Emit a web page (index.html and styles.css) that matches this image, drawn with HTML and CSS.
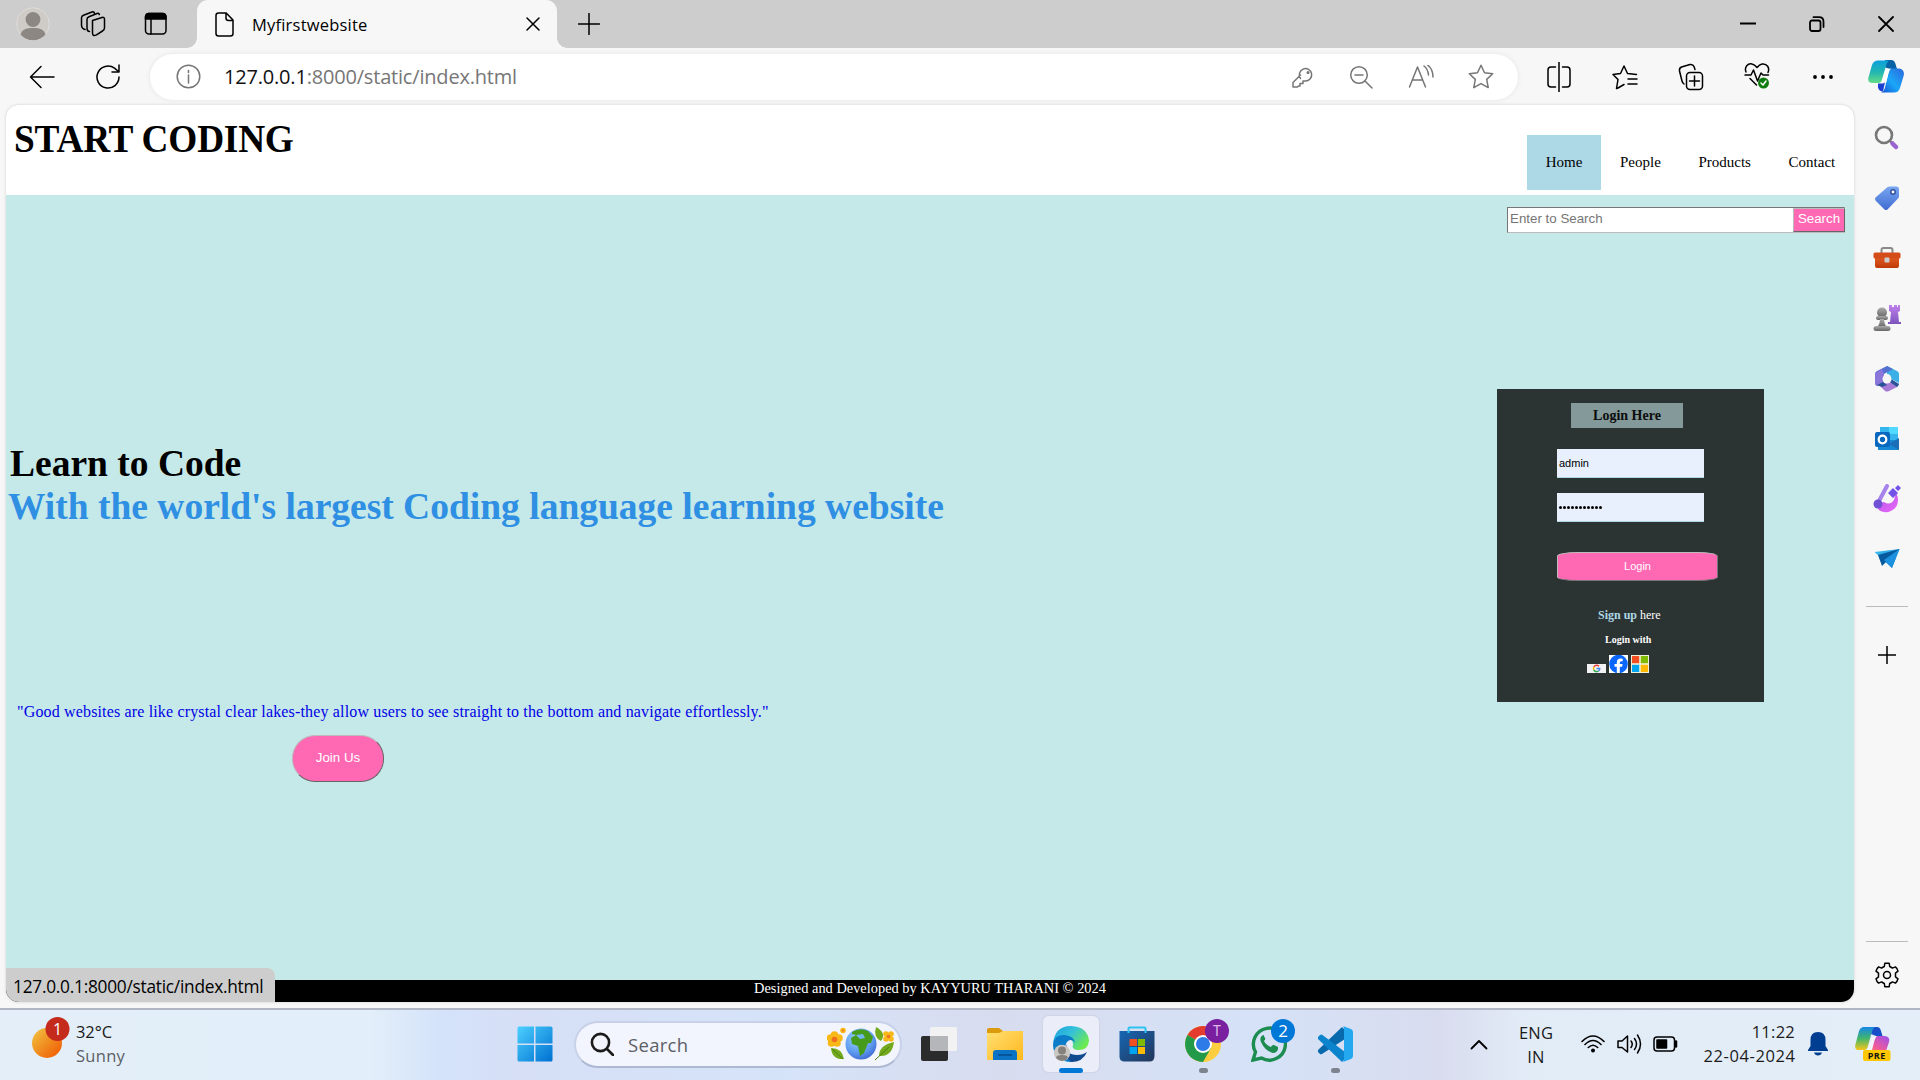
FILE: index.html
```html
<!DOCTYPE html>
<html lang="en">
<head>
<meta charset="utf-8">
<title>Myfirstwebsite</title>
<link rel="stylesheet" href="styles.css">
</head>
<body>
<svg width="0" height="0" class="defs">
  <defs>
    <linearGradient id="gSun" x1="0" y1="0" x2="1" y2="1"><stop offset="0.1" stop-color="#f0bc3c"/><stop offset="0.8" stop-color="#f06a0c"/></linearGradient>
    <linearGradient id="gWin" x1="0" y1="0" x2="1" y2="1"><stop offset="0" stop-color="#4cd0ff"/><stop offset="1" stop-color="#0070d0"/></linearGradient>
    <linearGradient id="gFolder" x1="0" y1="0" x2="1" y2="1"><stop offset="0" stop-color="#ffdf73"/><stop offset="1" stop-color="#ffb81c"/></linearGradient>
    <linearGradient id="gEdge" x1="0" y1="0" x2="1" y2="0.6"><stop offset="0" stop-color="#1b9de2"/><stop offset="0.5" stop-color="#35c1d9"/><stop offset="1" stop-color="#6cea50"/></linearGradient>
    <linearGradient id="gStore" x1="0" y1="0" x2="1" y2="1"><stop offset="0" stop-color="#1667b5"/><stop offset="1" stop-color="#243658"/></linearGradient>
    <linearGradient id="gCopA" x1="0" y1="0" x2="0" y2="1"><stop offset="0" stop-color="#0ba0dd"/><stop offset="0.5" stop-color="#21b5b2"/><stop offset="1" stop-color="#66dc88"/></linearGradient>
    <linearGradient id="gCopB" x1="1" y1="0" x2="0" y2="1"><stop offset="0" stop-color="#2b68dd"/><stop offset="0.55" stop-color="#1ba7f8"/><stop offset="1" stop-color="#1254d4"/></linearGradient>
    <linearGradient id="gPreA" x1="0" y1="0" x2="0" y2="1"><stop offset="0" stop-color="#1587e6"/><stop offset="0.5" stop-color="#43b66b"/><stop offset="1" stop-color="#f4c718"/></linearGradient>
    <linearGradient id="gPreB" x1="1" y1="0" x2="0" y2="1"><stop offset="0" stop-color="#9a50ee"/><stop offset="0.6" stop-color="#ef5a99"/><stop offset="1" stop-color="#f78a4a"/></linearGradient>
    <linearGradient id="gTag" x1="0" y1="0" x2="0" y2="1"><stop offset="0" stop-color="#78a7f0"/><stop offset="1" stop-color="#416bd3"/></linearGradient>
    <linearGradient id="gBox" x1="0" y1="0" x2="0" y2="1"><stop offset="0" stop-color="#e9642b"/><stop offset="1" stop-color="#c03a06"/></linearGradient>
    <linearGradient id="gGrey" x1="0" y1="0" x2="0" y2="1"><stop offset="0" stop-color="#aaa"/><stop offset="1" stop-color="#666"/></linearGradient>
    <linearGradient id="gPurple" x1="0" y1="0" x2="0" y2="1"><stop offset="0" stop-color="#c080ec"/><stop offset="1" stop-color="#7d55bd"/></linearGradient>
    <linearGradient id="gPink" x1="0" y1="0" x2="1" y2="1"><stop offset="0" stop-color="#b455ee"/><stop offset="1" stop-color="#e968f5"/></linearGradient>
    <linearGradient id="gPlane" x1="0" y1="0" x2="1" y2="1"><stop offset="0" stop-color="#3ec0f0"/><stop offset="1" stop-color="#1383d2"/></linearGradient>
    <radialGradient id="gEarth" cx="0.4" cy="0.3" r="0.8"><stop offset="0" stop-color="#9fd4ff"/><stop offset="0.6" stop-color="#5e9bf0"/><stop offset="1" stop-color="#3a5dcc"/></radialGradient>
  </defs>
</svg>

<div class="screen">
  <div class="tabstrip">
    <div class="tab-tools">
      <svg class="avatar" width="34" height="34" viewBox="0 0 34 34"><circle cx="17" cy="17" r="16.3" fill="#cfccc8" stroke="#dedcd8"/><circle cx="17" cy="12.5" r="7.4" fill="#8c8783"/><path d="M4.500 27.500C6 22 11 21 17 21s11 1 12.500 6.500A16.300 16.300 0 0 1 4.500 27.500Z" fill="#8c8783"/></svg>
      <svg class="ico workspaces" width="26" height="26" viewBox="0 0 26 26"><path d="M12.500 9.500 22 6.500q2.500-.7 2.500 1.800V17q0 2-2 3l-6 3.800q-4 2-4-1.800Z"/><path d="M9.500 20.500Q7 20.500 7 17V8.500q0-2 2-2.800l8-3.200q2-.6 2.300 1M5 18.500q-3.500-1-3.500-4.500V7q0-2 2-2.800L12 1q2-.6 2.300 1"/></svg>
      <svg class="ico" width="24" height="24" viewBox="0 0 24 24"><rect x="1.500" y="1.500" width="20.500" height="20.500" rx="3.500"/><path d="M1.500 7V5q0-3.500 3.500-3.500h13.500Q22 1.500 22 5v2Z" fill="#000"/><path d="M7 7v15"/></svg>
    </div>
    <div class="tab">
      <svg class="ico" width="19" height="25" viewBox="0 0 19 25"><path d="M3.500 1h7.700L18 8v13.500q0 2.500-2.500 2.500h-12Q1 24 1 21.500v-18Q1 1 3.500 1ZM11 1v5q0 2.500 2.500 2.500H18"/></svg>
      <span class="tab-title">Myfirstwebsite</span>
      <svg class="ico tab-close" width="14" height="14" viewBox="0 0 14 14"><path d="m1 1 12 12M13 1 1 13"/></svg>
    </div>
    <svg class="ico newtab" width="22" height="22" viewBox="0 0 22 22"><path d="M11 .5v21M.5 11h21"/></svg>
    <div class="winctl">
      <svg class="ico bold" width="16" height="16" viewBox="0 0 16 16"><path d="M0 7.500h16"/></svg>
      <svg class="ico bold" width="16" height="16" viewBox="0 0 16 16"><rect x="1" y="4.500" width="10.500" height="10.500" rx="2"/><path d="M4.500 1.200H10q4.500 0 4.500 4.500V11"/></svg>
      <svg class="ico bold" width="16" height="16" viewBox="0 0 16 16"><path d="m1 1 14 14M15 1 1 15"/></svg>
    </div>
  </div>

  <div class="toolbar">
    <div class="nav-tools">
      <svg class="ico" width="26" height="24" viewBox="0 0 26 24"><path d="M25 12H1.500M12 1.500 1.500 12 12 22.500"/></svg>
      <svg class="ico" width="26" height="26" viewBox="0 0 26 26"><path d="M24 13A11 11 0 1 1 19.500 4.200L23.500 7.500M24 1v7h-7"/></svg>
    </div>
    <div class="address">
      <svg class="ico grey" width="25" height="25" viewBox="0 0 25 25"><circle cx="12.500" cy="12.500" r="11.300"/><path d="M12.500 11v8M12.500 6.500v2"/></svg>
      <span class="url"><b>127.0.0.1</b>:8000/static/index.html</span>
      <div class="addr-icons">
        <svg class="ico grey" width="24" height="24" viewBox="0 0 24 24"><path d="M9.500 13.500A6.200 6.200 0 1 1 14 16h-2v2.500H9V21H7.500l-1 1H2v-4.500l7.500-7.500"/><circle cx="17" cy="7.500" r=".8"/></svg>
        <svg class="ico grey" width="24" height="24" viewBox="0 0 24 24"><circle cx="10" cy="10" r="8.300"/><path d="m16 16 7 7M6 10h8"/></svg>
        <svg class="ico grey" width="26" height="24" viewBox="0 0 26 24"><path d="m1.500 22 8-20 8 20M4.500 15h10M16 1q4 3 4.500 9M19.500 0Q25 4 25 12"/></svg>
        <svg class="ico grey" width="26" height="25" viewBox="0 0 26 25"><path d="m13 1.200 3.500 7.500 8.200 1-6 5.700 1.500 8.200-7.200-4-7.200 4 1.500-8.200-6-5.700 8.200-1Z"/></svg>
      </div>
    </div>
    <div class="browser-tools">
      <svg class="ico" width="26" height="30" viewBox="0 0 26 30"><path d="M9.500 5H5Q2 5 2 8v14q0 3 3 3h4.500M16.500 5H21q3 0 3 3v14q0 3-3 3h-4.500M13 0v30"/></svg>
      <svg class="ico" width="26" height="26" viewBox="0 0 26 26"><path d="m6 24-1.500.5L6 15.500 1 10.500l7.500-1L12 2l3.500 7.500 9 1M6 24l6-3.500M16 15h9M16 20h9"/></svg>
      <svg class="ico" width="26" height="28" viewBox="0 0 26 28"><rect x="8.500" y="9.500" width="16" height="17" rx="3.500"/><path d="M16.500 13v10M11.500 18h10M6 21Q4.500 20 4 18L1.500 8q-.5-3 2-4L12 1.500q3-.5 4 2l1 3"/></svg>
      <svg class="ico" width="26" height="29" viewBox="0 0 26 29"><path d="M2 10C0 5 4 1 8 2q2.500.5 5 3.500Q15.500 2.500 18 2c5-.8 8 4 6 8.500M1 13h6l2.500-5 4 11 3.500-8 2 2h5.500M6 16.500l6.500 6.500"/><circle cx="19.500" cy="21" r="5.500" fill="#107c10" stroke="none"/><path d="m17 21 2 2 3-4" stroke="#fff"/></svg>
      <svg width="22" height="8" viewBox="0 0 22 8"><circle cx="3" cy="4" r="1.900"/><circle cx="11" cy="4" r="1.900"/><circle cx="19" cy="4" r="1.900"/></svg>
      <svg width="36" height="33" viewBox="0 0 36 33"><path d="M17 0h6q3.500 0 4.500 4l1.500 5h-7l-6-2Z" fill="#0862a5"/><path d="M10 .5h11q-2 1-3.500 7l-4 13.500q-.8 2-3 2H5Q-.5 23.500.3 18L4 5Q5.500.5 10 .5Z" fill="url(#gCopA)"/><path d="M10 23.500h5l2-1.500-2 9.500q-4 0-5-4Z" fill="#1b3fd0"/><path d="M22.500 8.500H31q6 1 4.700 7L32 28q-1.500 4.500-6 4.500H13q3-1 4-5l3-13q1-5 2.500-6Z" fill="url(#gCopB)"/><path d="M18 10q1-1.500 5-1.500-1.500 1-2.500 5l-2.300 9H13q1-1 1.500-2.500Z" fill="#fff"/></svg>
    </div>
  </div>

  <div class="workarea">
    <main class="page">
      <header class="site-head">
        <h1>START CODING</h1>
        <nav><a class="active">Home</a><a>People</a><a>Products</a><a>Contact</a></nav>
      </header>
      <section class="hero">
        <div class="search-row"><div class="search-box"><span>Enter to Search</span><div class="search-btn">Search</div></div></div>
        <div class="hero-main">
          <div class="pitch">
            <h2>Learn to Code</h2>
            <h2 class="blue">With the world's largest Coding language learning website</h2>
            <p class="quote">"Good websites are like crystal clear lakes-they allow users to see straight to the bottom and navigate effortlessly."</p>
            <div class="join">Join Us</div>
          </div>
          <div class="login">
            <div class="login-title">Login Here</div>
            <div class="field">admin</div>
            <div class="field dots"><i></i><i></i><i></i><i></i><i></i><i></i><i></i><i></i><i></i><i></i><i></i></div>
            <div class="login-btn">Login</div>
            <div class="signup"><b>Sign up</b> <span>here</span></div>
            <div class="with">Login with</div>
            <div class="socials">
              <svg width="19" height="9" viewBox="0 0 19 9"><path fill="#f2f2f2" d="M0 0h19v9H0z"/><g fill="none" stroke-width="1.500"><path d="M12 2.300A3.300 3.300 0 0 0 6.800 3" stroke="#ea4335"/><path d="M6.800 3a3.300 3.300 0 0 0 0 3" stroke="#fbbc05"/><path d="M6.800 6a3.300 3.300 0 0 0 4.800 1" stroke="#34a853"/><path d="M11.600 7A3 3 0 0 0 12.700 4.500H9.500" stroke="#4285f4"/></g></svg>
              <svg width="19" height="18" viewBox="0 0 19 18"><path fill="#fff" d="M0 0h19v18H0z"/><circle cx="9.500" cy="9" r="9.300" fill="#0866ff"/><path d="M7.800 18v-6.200H5.500V9h2.300V7.500q0-4 4-4 1 0 1.900.2v2.500h-1.400q-1.500 0-1.500 1.500V9h2.800l-.5 2.800h-2.300V18Z" fill="#fff"/></svg>
              <svg width="18" height="18" viewBox="0 0 18 18"><path fill="#f3f0d8" d="M0 0h18v18H0z"/><path fill="#f25022" d="M1 1h7.200v7.200H1z"/><path fill="#7fba00" d="M9.800 1H17v7.200H9.800z"/><path fill="#00a4ef" d="M1 9.800h7.200V17H1z"/><path fill="#ffb900" d="M9.800 9.800H17V17H9.800z"/></svg>
            </div>
          </div>
        </div>
      </section>
      <footer>Designed and Developed by KAYYURU THARANI © 2024</footer>
      <div class="status">127.0.0.1:8000/static/index.html</div>
    </main>

    <aside class="sidebar">
      <div class="slot"><svg width="26" height="26" viewBox="0 0 26 26"><circle cx="10" cy="10" r="8" fill="none" stroke="#777" stroke-width="2.600"/><path d="m15.500 15.500 2.500 2.500" stroke="#777" stroke-width="2.400"/><path d="m18.500 18.500 3.500 3.500" stroke="#9b63cf" stroke-width="4.500" stroke-linecap="round"/></svg></div>
      <div class="slot"><svg width="26" height="26" viewBox="0 0 26 26"><path d="M13 2.500 Q14 1.500 16 1.500h6q3 0 3 3V11q0 1.500-1 2.500L13.500 24.500q-1.500 1-3 0L1.500 15.500q-1-1.500 0-3Z" fill="url(#gTag)"/><circle cx="19" cy="7" r="2.200" fill="#fff" stroke="#31509c" stroke-width="1.500"/></svg></div>
      <div class="slot"><svg width="28" height="24" viewBox="0 0 28 24"><path d="M8.500 7V4q0-2 2-2h7q2 0 2 2v3" fill="none" stroke="#8a8a8a" stroke-width="2"/><rect x="2" y="8" width="24" height="14" rx="2" fill="url(#gBox)"/><rect x=".5" y="6.500" width="27" height="6" rx="1.500" fill="#d44d18"/><rect x="11.500" y="11.500" width="5" height="5" rx="1" fill="#ccc"/></svg></div>
      <div class="slot"><svg width="28" height="28" viewBox="0 0 28 28"><path d="M16 1h3v2h2V1h3v2h1V1h2v6l-2 1 1 10h2v2H15v-2h2l1-10-2-1Z" fill="url(#gPurple)"/><g fill="url(#gGrey)"><circle cx="9" cy="8.500" r="5"/><rect x="3" y="12" width="12" height="4" rx="2"/><path d="M7 15h4q0 5 3 8H4q3-3 3-8Z"/><rect x=".5" y="22" width="17" height="5" rx="2.500"/></g></svg></div>
      <div class="slot"><svg width="26" height="28" viewBox="0 0 26 28"><path d="m13 1 10 5q2 1 2 3v9l-8-4q0-5-4-5Z" fill="#3cafe6"/><path d="m13 1 6 3-9 5v10l-7 2q-2-1-2-3V9q0-2 2-3Z" fill="#5571cf"/><path d="m8 4-5 3q-2 1-2 3v8q0 2 2 3l7-2V9Z" fill="#8b76d9"/><path d="m5 20 12-5 8 4q0 2-2 3l-8 4q-2 1-4 0Z" fill="#a67bd6"/><path d="m17 14 8 5-2 3-7-5ZM9 17l4 3-5 2-5-2Z" fill="#285397"/><circle cx="13" cy="14" r="4.500" fill="#f7f7f7"/></svg></div>
      <div class="slot"><svg width="26" height="26" viewBox="0 0 26 26"><path d="M6 1h18v14H6Z" fill="#35b5ee"/><path d="M15 1h9v7h-9Z" fill="#50d9ff"/><path d="M4 14h21v10H4Z" fill="#1589d4"/><path d="m25 12-10 6 10 6Z" fill="#1b6fb7"/><rect x="1" y="6" width="15" height="15" rx="2" fill="#0867be"/><circle cx="8.500" cy="13.500" r="3.800" fill="none" stroke="#fff" stroke-width="2.300"/></svg></div>
      <div class="slot"><svg width="28" height="30" viewBox="0 0 28 30"><path d="M11 18q6 4 10-2l2-7q4 7 0 14-5 6-12 5-7-1-8-8Z" fill="url(#gPink)"/><path d="m14 2-8 15" stroke="#a682ea" stroke-width="4" stroke-linecap="round"/><circle cx="5" cy="20" r="4.500" fill="#7050d4"/><path d="m20 4 5 5-5 5-5-5ZM25 1l3 3-3 3-3-3Z" fill="#7253e8"/></svg></div>
      <div class="slot"><svg width="26" height="20" viewBox="0 0 26 20"><path d="M.5 3 25.500 0 18 19Z" fill="url(#gPlane)"/><path d="M4 6 25.500 0 8 17Z" fill="#075a9e"/><path d="m10 11 15.500-11L18 19Z" fill="#1b91df"/></svg></div>
      <hr>
      <svg class="ico add" width="18" height="18" viewBox="0 0 18 18"><path d="M9 0v18M0 9h18"/></svg>
      <hr class="low">
      <svg class="ico gear" width="26" height="26" viewBox="0 0 26 26"><path d="M10.300 4.500 10.800 1.300h4.400l.5 3.200q1.500.6 2.700 1.600l3-1.200q2.200 1.800 2.600 4.300l-2.500 2v3.600l2.500 2q-.7 2.600-2.600 4.300l-3-1.200q-1.200 1-2.700 1.600l-.5 3.200h-4.400l-.5-3.200q-1.500-.6-2.700-1.600l-3 1.200Q2.600 19.400 2 16.800l2.500-2v-3.600L2 9.200q.7-2.600 2.600-4.300l3 1.200q1.200-1 2.700-1.600Z"/><circle cx="13" cy="13" r="3.500"/></svg>
    </aside>
  </div>

  <div class="taskbar">
    <div class="weather">
      <svg width="40" height="44" viewBox="0 0 40 44"><circle cx="15" cy="28" r="15" fill="url(#gSun)"/><circle cx="25.500" cy="14" r="12" fill="#c42b1c"/><text x="25.500" y="20" class="badge-text">1</text></svg>
      <div class="weather-text"><span>32°C</span><span class="dim">Sunny</span></div>
    </div>
    <div class="apps">
      <div class="app"><svg width="36" height="36" viewBox="0 0 36 36"><path fill="url(#gWin)" d="M2 .5h15v17H.5V2Q.5.500 2 .500ZM18.500.500H34q1.500 0 1.500 1.500v15.500h-17ZM.500 19H17v16.500H2Q.5 35.500.5 34ZM18.500 19h17v15q0 1.500-1.500 1.500H18.500Z"/></svg></div>
      <div class="task-search">
        <svg class="ico glass" width="24" height="24" viewBox="0 0 24 24"><circle cx="10.500" cy="10.500" r="8.600"/><path d="m17 17 6 6"/></svg>
        <span>Search</span>
        <svg width="68" height="36" viewBox="0 0 68 36"><g fill="#f8b818"><circle cx="7.500" cy="9" r="3.800"/><circle cx="12" cy="12" r="3.800"/><circle cx="10" cy="17" r="3.800"/><circle cx="4.500" cy="17" r="3.800"/><circle cx="3.500" cy="12" r="3.800"/><circle cx="16" cy="4.500" r="2.800"/><circle cx="59" cy="8" r="2.800"/><circle cx="64" cy="8" r="2.800"/><circle cx="64" cy="13" r="2.800"/><circle cx="59" cy="13" r="2.800"/></g><g fill="#f07020"><circle cx="7.500" cy="13.500" r="2.800"/><circle cx="61.500" cy="10.500" r="1.800"/><circle cx="16" cy="4.500" r="1"/></g><circle cx="34" cy="18" r="15.500" fill="url(#gEarth)"/><path d="M25 6q8-5 16-1l5 6-2 6h-3l-4 10-4 3-2-10-6-2-1-6 5-3-4-1Z" fill="#469b1c"/><path d="M29 9l7-1 2 4-5 1Z" fill="#72b6f5"/><g fill="#73a91c"><path d="M4 22q11 0 13 11Q5 34 4 22ZM49 1q11 6 5 14-8-4-5-14ZM67 16q-2 15-15 14 0-11 15-14Z"/></g><path d="m48 34 14-13M5 23l11 10" stroke="#4f7f12" fill="none"/></svg>
      </div>
      <div class="app"><svg width="36" height="36" viewBox="0 0 36 36"><rect x="0" y="10" width="27" height="25" rx="2" fill="#2b2b2b"/><path d="M27 1h7.500q1.500 0 1.500 1.500v21q0 1.500-1.500 1.500H27V10H9V2.500Q9 1 10.500 1Z" fill="#f2f2f2"/><path d="M9 10h18v15H10.500Q9 25 9 23.500Z" fill="#b5b6ba"/></svg></div>
      <div class="app"><svg width="36" height="34" viewBox="0 0 36 34"><path d="M0 3q0-2 2-2h10l4 3h18q2 0 2 2v6H0Z" fill="#dc9a0d"/><path d="M0 6h12l4-2h20v29H0Z" fill="url(#gFolder)"/><path d="M6 33V26q0-3 3-3h18q3 0 3 3v7Z" fill="#0a73c6"/><path d="M11 28h14" stroke="#064b88" stroke-width="1.500"/></svg></div>
      <div class="app active"><svg width="36" height="36" viewBox="0 0 36 36"><path d="M0 19Q1 0 18 0q17 1 18 15-1 9-10 9-8 0-6-6 0-6-8-6Q2 12 0 19Z" fill="url(#gEdge)"/><path d="M0 19Q1 8 12 9q9 1 10 8-3-5-7-2-4 3-2 9 2 8 8 12Q1 37 0 19Z" fill="#0c7cc9"/><path d="M13.500 18q-1 11 10.500 11 6 0 10-3-4 10-16 10-9-7-4.500-18Z" fill="#114a8f"/><circle cx="9" cy="27" r="8.200" fill="#cbc8c4"/><circle cx="9" cy="24.500" r="4" fill="#85807c"/><path d="M3 32q0-3 6-3t6 3q-6 6-12 0Z" fill="#85807c"/></svg></div>
      <div class="app"><svg width="36" height="36" viewBox="0 0 36 36"><path d="M.5 5h35v25q0 5.500-5 5.500h-25q-5 0-5-5Z" fill="url(#gStore)"/><path d="M9.500 7V2.500q0-1 1-1h15q1 0 1 1V7" fill="none" stroke="#2fc3f2" stroke-width="2"/><path d="M10.500 13H18v7h-7.500Z" fill="#f25022"/><path d="M19 13h7v7h-7Z" fill="#7fba00"/><path d="M10.500 21H18v7h-7.500Z" fill="#00a4ef"/><path d="M19 21h7v7h-7Z" fill="#ffb900"/></svg></div>
      <div class="app run"><svg width="36" height="36" viewBox="0 0 36 36"><circle cx="18" cy="18" r="18" fill="#ffcd40"/><path d="M18 18 2.500 9A18 18 0 0 1 33.600 9Z" fill="#e33b2e"/><path d="M2.500 9A18 18 0 0 0 18 36l8-14-8-4Z" fill="#229a4a"/><path d="M18 9h15.600" stroke="#e33b2e"/><circle cx="18" cy="18" r="9" fill="#fff"/><circle cx="18" cy="18" r="7" fill="#2c7be8"/></svg><span class="badge t">T</span></div>
      <div class="app"><svg width="36" height="36" viewBox="0 0 36 36"><path d="M2 34 4.500 26A16 16 0 1 1 10.500 32Z" fill="none" stroke="#1c8c50" stroke-width="3.400"/><path d="M12 9q-4 2-2 7 4 9 12 11 4 0 5-4v-2l-4-2q-2-.5-3 2-5-2-7-6 2-2 1-3l-1.500-3Z" fill="#1c8c50"/></svg><span class="badge two">2</span></div>
      <div class="app run"><svg width="36" height="36" viewBox="0 0 36 36"><path d="M1 24 25 1l3 3v9L5 28q-1 .5-2 0l-2-2Z" fill="#0869ad"/><path d="m1 11 2-2q1-.8 2.500 0L28 26v7l-3 3L1 13Z" fill="#0c84cd"/><path d="m26 0 8 3q2 1 2 3v24q0 2-2 3l-8 3q1-1 1-3V3q0-2-1-3Z" fill="#24a8ef"/></svg></div>
    </div>
    <div class="tray">
      <svg class="ico bold chev" width="18" height="11" viewBox="0 0 18 11"><path d="m1.500 9.500 7.500-7.500 7.500 7.500"/></svg>
      <div class="lang"><span>ENG</span><span>IN</span></div>
      <svg class="ico" width="24" height="18" viewBox="0 0 24 18"><path d="M1 6.500Q12-4.500 23 6.500M4 9.500Q12 1.500 20 9.500M7.300 12.500Q12 8 16.700 12.500" stroke-width="1.600"/><circle cx="12" cy="15.500" r="2" fill="#000" stroke="none"/></svg>
      <svg class="ico spk" width="25" height="20" viewBox="0 0 25 20"><path d="M1 7v6.500h4L10.500 18V2L5 7ZM14 7q2.500 3 0 6.500M17.500 4.500q4 5.500 0 11M20.500 1q6 9 0 18"/></svg>
      <svg class="ico" width="25" height="16" viewBox="0 0 25 16"><rect x="1" y="1" width="20.500" height="14" rx="3"/><path d="M4 4h9.500v8H4Z" fill="#000"/><path d="M23 5.500v5" stroke-width="2.500"/></svg>
      <div class="clock"><span>11:22</span><span class="date">22-04-2024</span></div>
      <svg class="bell" width="20" height="24" viewBox="0 0 20 24"><path d="M10 0q7.500 0 7.500 8v6l2.500 4v1H0v-1l2.500-4V8Q2.500 0 10 0ZM6 20.500h8q-1 3-4 3t-4-3Z" fill="#003e92"/></svg>
      <svg class="pre" width="36" height="36" viewBox="0 0 36 36"><path d="M17 1h5q3 0 4 4l1.500 5H21l-5-2Z" fill="#174fc9"/><path d="M9 1h11q-2 1-3.500 6l-4 14.500q-1 2.500-3 2.500H4Q-.5 24 .3 19L4 5Q5.500 1 9 1Z" fill="url(#gPreA)"/><path d="M21.500 10H30q5.500 1 4 6l-3 9H8q7 2 8.500-4l3-8q.5-2.500 2-3Z" fill="url(#gPreB)"/><path d="M17.500 11q1-1.500 4.500-1-1.500 1-2.500 4.500L17 24h-5q1-1 1.500-2.500Z" fill="#f4f5fb"/><rect x="8" y="24" width="27.500" height="11" rx="2" fill="#ffc700"/><text x="21.800" y="32.500" class="pre-text">PRE</text></svg>
    </div>
  </div>
</div>
</body>
</html>
```
FILE: styles.css
```css
* { box-sizing: border-box; }
body { margin: 0; font-family: "Open Sans", "Noto Sans", sans-serif; color: #000; }
.defs { display: block; height: 0; }
svg { display: block; flex: none; }
.ico { fill: none; stroke: #000; stroke-width: 1.5; stroke-linecap: round; stroke-linejoin: round; }
.ico.bold { stroke-width: 1.8; }
.ico.grey { stroke: #767676; }
.screen { width: 1920px; height: 1080px; display: flex; flex-direction: column; overflow: hidden; background: #f7f7f7; }

.tabstrip { height: 48px; background: #cdcdcd; display: flex; align-items: center; flex: none; }
.tab-tools { width: 197px; padding-left: 16px; display: flex; align-items: center; }
.workspaces { margin-left: 30px; margin-right: 38px; }
.tab { position: relative; width: 360px; height: 48px; background: #f7f7f7; border-radius: 11px 11px 0 0; display: flex; align-items: center; padding: 0 17px 0 18px; }
.tab::before, .tab::after { content: ""; position: absolute; bottom: 0; width: 10px; height: 10px; }
.tab::before { left: -10px; background: radial-gradient(circle at 0 0, transparent 9.5px, #f7f7f7 10px); }
.tab::after { right: -10px; background: radial-gradient(circle at 100% 0, transparent 9.5px, #f7f7f7 10px); }
.tab-title { margin-left: 18px; font-size: 16.5px; letter-spacing: .2px; flex: 1; }
.newtab { margin-left: 21px; }
.winctl { margin-left: auto; padding-right: 26px; display: flex; gap: 53px; }

.toolbar { height: 57px; flex: none; display: flex; align-items: center; }
.nav-tools { width: 150px; padding-left: 29px; display: flex; align-items: center; gap: 40px; }
.address { width: 1368px; height: 46px; border-radius: 23px; background: #fff; box-shadow: 0 0 5px #e4e4e4; display: flex; align-items: center; padding: 0 24px 0 26px; }
.url { margin-left: 23px; font-size: 20px; color: #767676; flex: 1; letter-spacing: -.19px; white-space: nowrap; }
.url b { font-weight: 400; color: #111; }
.addr-icons { display: flex; align-items: center; gap: 34.5px; }
.browser-tools { flex: 1; padding-left: 8px; display: grid; grid-template-columns: repeat(5, 66px) 60px; align-items: center; justify-items: center; }

.workarea { height: 903px; flex: none; display: flex; padding-left: 6px; }
.page { position: relative; width: 1848px; height: 897px; border-radius: 13px; overflow: hidden; box-shadow: 0 0 3px #ccc; display: flex; flex-direction: column; background: #fff; font-family: "Liberation Serif", serif; }
.site-head { height: 90px; flex: none; display: flex; justify-content: space-between; padding-left: 8px; }
h1 { margin: 10px 0 0; font-size: 40px; line-height: 48px; letter-spacing: -.25px; white-space: nowrap; transform: scaleX(.933); transform-origin: 0 0; }
nav { display: flex; height: 55px; margin-top: 30px; font-size: 15px; line-height: 55px; }
nav a { padding: 0 18.8px; }
nav .active { background: #add8e6; }
.hero { flex: 1; background: #c5e8e9; }
.search-row { display: flex; justify-content: flex-end; padding: 12px 9px 0 0; }
.search-box { width: 338px; height: 26px; background: #fff; border: 1px solid #767676; border-right-color: #bbb; border-bottom-color: #bbb; display: flex; justify-content: space-between; font: 13.33px/22px "Liberation Sans", sans-serif; color: #757575; padding-left: 2px; }
.search-btn { width: 52px; height: 24px; margin-right: -1px; text-align: center; color: #fff; background: #ff69b4; border: 1px solid #bbb; border-right-color: #666; border-bottom-color: #666; line-height: 19px; }
.hero-main { display: flex; justify-content: space-between; padding-right: 90px; }
.pitch { padding-top: 209px; }
h2 { margin: 0 0 0 4px; font-size: 37.5px; line-height: 43px; white-space: nowrap; }
.blue { color: #2e8fe3; margin-left: 2px; }
.quote { margin: 172px 0 0 11px; font-size: 16px; line-height: 24px; letter-spacing: .155px; color: #0000e6; white-space: nowrap; }
.join { width: 92px; height: 47px; margin: 11px 0 0 286px; border-radius: 23px; background: #ff69b4; border: 1.5px solid; border-color: #bbb #666 #666 #bbb; color: #fff; font: 13.33px/43px "Liberation Sans", sans-serif; text-align: center; }
.login { width: 267px; height: 313px; margin-top: 156px; background: #2c3333; padding-top: 14px; color: #fff; }
.login-title { width: 112px; height: 25px; margin-left: 74px; background: #849999; color: #0b0d0d; font-weight: 700; font-size: 14px; line-height: 25px; text-align: center; }
.field { width: 147px; height: 29px; margin: 21px 0 0 60px; padding-left: 2px; background: #e8f0fe; border-bottom: 1px solid #add8e6; color: #000; font: 11px/28px "Liberation Sans", sans-serif; }
.field + .field { margin-top: 15px; }
.dots { display: flex; align-items: center; gap: 1px; }
.dots i { width: 3px; height: 3px; border-radius: 50%; background: #000; }
.login-btn { width: 161px; height: 29px; margin: 30px 0 0 60px; border-radius: 20px / 4px; background: #ff69b4; border: 1px solid; border-color: #bbb #777 #777 #bbb; font: 11px/27px "Liberation Sans", sans-serif; text-align: center; }
.signup { margin: 26px 0 0 101px; font-size: 12px; line-height: 16px; }
.signup b { color: #add8e6; }
.with { margin: 10px 0 0 108px; font-size: 10px; font-weight: 700; line-height: 14px; }
.socials { display: flex; align-items: flex-end; gap: 3px; margin: 8px 0 0 90px; }
footer { height: 22px; flex: none; background: #000; color: #fff; text-align: center; font-size: 14.4px; line-height: 17px; }
.status { position: absolute; left: -1px; bottom: -1px; width: 270px; height: 35px; background: #cdcdcd; border-radius: 0 8px 0 10px; padding-left: 8px; font: 17.3px/37px "Open Sans", sans-serif; letter-spacing: -.25px; white-space: nowrap; }

.sidebar { flex: 1; padding: 3px 1px 0 0; display: flex; flex-direction: column; align-items: center; }
.slot { height: 60.15px; display: flex; align-items: center; justify-content: center; }
hr { width: 42px; height: 1px; margin: 17px 0 0; border: 0; background: #bbb; flex: none; }
.add { margin-top: 39px; }
.low { margin-top: 277px; }
.gear { margin-top: 20px; }

.taskbar { height: 72px; flex: none; border-top: 2px solid #b0b6c4; background: linear-gradient(90deg, #e3eef8 0, #e2eef9 370px, #d4e3fa 440px, #d6dff6 520px, #d5e3f8 780px, #d8dcef 1000px, #d5e2f7 1260px, #d9dcef 1440px, #e2ecf7 1530px, #e4eef8 100%); display: flex; color: #1b1b1b; }
.weather { width: 502px; padding: 3px 0 0 32px; display: flex; font-size: 16.5px; }
.weather svg { margin-top: 2px; }
.weather-text, .lang, .clock { display: flex; flex-direction: column; line-height: 24px; }
.weather-text { padding: 7px 0 0 4px; letter-spacing: -.1px; }
.dim { color: #5c6066; letter-spacing: .3px; }
.badge-text { fill: #fff; font-size: 16px; text-anchor: middle; }
.apps { display: flex; height: 68px; align-items: center; }
.app { position: relative; width: 66px; height: 68px; display: flex; align-items: center; justify-content: center; }
.active.app::before { content: ""; position: absolute; inset: 6px 5px 6px 5px; border-radius: 6px; background: #ebeef9; box-shadow: 0 0 1px 1px #cfd4e4; }
.app svg { position: relative; }
.active.app::after, .run::after { content: ""; position: absolute; bottom: 5px; width: 9px; height: 5px; border-radius: 3px; background: #7d838c; }
.active.app::after { width: 24px; background: #0078d7; }
.badge { position: absolute; top: 9px; right: 7px; width: 24px; height: 24px; border-radius: 50%; color: #fff; text-align: center; font-size: 17px; line-height: 24px; }
.t { background: #7a1fa0; color: #dcb8e8; font: 14px/24px Roboto, sans-serif; }
.two { background: #0078d7; }
.task-search { width: 328px; height: 47px; margin: 0 4px 0 6px; border-radius: 24px; border: 2px solid #c8d1e8; border-bottom-color: #adb9d2; background: #f2f5fd; display: flex; align-items: center; padding: 0 5px 0 14px; font-size: 18.5px; color: #5d6066; }
.task-search span { margin-left: 14px; flex: 1; letter-spacing: .3px; }
.glass { stroke: #1b1b1b; stroke-width: 2.6; }
.tray { flex: 1; display: flex; align-items: center; height: 68px; font-size: 16.5px; }
.chev { margin-left: 102px; }
.lang { width: 34px; margin: 1px 28px 0 31px; align-items: center; letter-spacing: .2px; }
.spk { margin: 0 11px 0 12px; }
.clock { width: 117px; align-items: flex-end; letter-spacing: .25px; white-space: nowrap; }
.date { letter-spacing: .6px; margin-right: -.6px; }
.bell { margin-left: 13px; }
.pre { margin-left: 27px; }
.pre-text { font: 700 9px "Open Sans", sans-serif; text-anchor: middle; fill: #111; letter-spacing: .5px; }
```
